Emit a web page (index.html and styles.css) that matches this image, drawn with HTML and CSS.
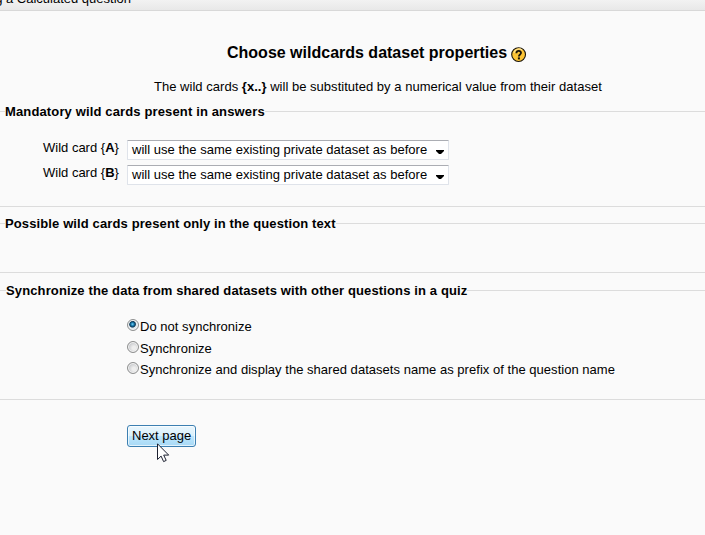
FILE: index.html
```html
<!DOCTYPE html>
<html lang="en">
<head>
<meta charset="utf-8">
<title>Editing a Calculated question</title>
<link rel="stylesheet" href="styles.css">
</head>
<body>
<header class="navbar"><span class="crumb">g a Calculated question</span></header>
<main>
  <div class="heading">
    <h2>Choose wildcards dataset properties</h2>
    <svg class="help" width="16" height="16" viewBox="0 0 16 16"><circle cx="7.6" cy="7.6" r="6.9" fill="#fdc536" stroke="#17120a" stroke-width="1.1"/><path d="M3 6a5 5 0 0 1 8-3" fill="none" stroke="#ffe493" stroke-width="1.2"/><path d="M5.4 6.2C5.5 3.2 10.2 3.3 10 6C9.9 7.5 7.9 7.6 7.9 9.4" fill="none" stroke="#17120a" stroke-width="1.8"/><rect x="6.9" y="10.4" width="2" height="2" fill="#17120a"/></svg>
  </div>
  <p class="intro">The wild cards <b>{x..}</b> will be substituted by a numerical value from their dataset</p>
  <section class="group mandatory">
    <h3 class="legend"><span class="l1">Mandatory wild cards present in answers</span></h3>
    <div class="row"><span class="label">Wild card {<b>A</b>}</span><div class="select"><span>will use the same existing private dataset as before</span><svg width="8" height="4" viewBox="0 0 8 4"><path d="M0 0h8v1L5 4H3L0 1z"/></svg></div></div>
    <div class="row"><span class="label">Wild card {<b>B</b>}</span><div class="select"><span>will use the same existing private dataset as before</span><svg width="8" height="4" viewBox="0 0 8 4"><path d="M0 0h8v1L5 4H3L0 1z"/></svg></div></div>
  </section>
  <section class="group possible">
    <h3 class="legend"><span class="l2">Possible wild cards present only in the question text</span></h3>
  </section>
  <section class="group sync">
    <h3 class="legend wide"><span class="l3">Synchronize the data from shared datasets with other questions in a quiz</span></h3>
    <div class="option"><i class="radio on"></i><span>Do not synchronize</span></div>
    <div class="option"><i class="radio"></i><span>Synchronize</span></div>
    <div class="option third"><i class="radio"></i><span>Synchronize and display the shared datasets name as prefix of the question name</span></div>
  </section>
  <div class="button"><span>Next page</span></div>
</main>
<svg class="cursor" width="13" height="20" viewBox="0 0 13 20"><path d="M.5.8v15.7l3.6-3.4 2.5 5.5 2.6-1.2-2.5-5.3h5z" fill="#fff" stroke="#1c2030"/></svg>
</body>
</html>
```
FILE: styles.css
```css
* { box-sizing: border-box; }
body {
  margin: 0;
  width: 705px;
  height: 535px;
  overflow: hidden;
  position: relative;
  background: #fafafa;
  color: #000;
  font: 13px/16px "Liberation Sans", Arial, sans-serif;
  white-space: nowrap;
}
.navbar {
  height: 11px;
  overflow: hidden;
  display: flex;
  align-items: flex-end;
  background: linear-gradient(#f2f2f2, #e8e8e8);
  border-bottom: 1px solid #d8d8d8;
}
.crumb { width: 131px; display: flex; justify-content: flex-end; margin-bottom: 3px; }
.heading { display: flex; align-items: center; height: 20px; margin-top: 32px; padding-left: 227px; }
h2 { margin: 0; font-size: 16px; line-height: 20px; }
.help { margin: 3px 0 0 4px; }
.intro { margin: 16px 0 0 154px; letter-spacing: .025px; }
.group { border-bottom: 1px solid #dcdcdc; }
.legend { margin: 0; display: flex; align-items: center; font-size: 13px; line-height: 16px; }
.legend::before, .legend::after { content: ""; height: 1px; margin-bottom: 1px; background: #dcdcdc; }
.legend::before { width: 5px; }
.legend.wide::before { width: 6px; }
.legend::after { flex: 1; }
.l1 { letter-spacing: .14px; }
.l2 { letter-spacing: .118px; }
.l3 { letter-spacing: .128px; }
.mandatory { margin-top: 9px; height: 103px; }
.possible { margin-top: 9px; height: 57px; }
.sync { margin-top: 10px; height: 117px; }
.row { display: flex; height: 25px; }
.mandatory .legend { margin-bottom: 20px; }
.label { width: 127px; padding: 0 8px 0 43px; }
.select {
  width: 322px;
  height: 20px;
  padding: 0 4px;
  display: flex;
  align-items: center;
  justify-content: space-between;
  background: #fff;
  border: 1px solid #dfe3ea;
  border-top-color: #abadb3;
  border-radius: 1px;
  letter-spacing: .02px;
}
.select svg { margin-top: 3px; }
.sync .legend { margin-bottom: 20px; }
.option { display: flex; height: 22px; padding-left: 127px; letter-spacing: .03px; }
.third { margin-top: -1px; }
.radio {
  width: 12px;
  height: 12px;
  margin: 0 1px 0 0;
  border: 1px solid #8e8f8f;
  border-radius: 50%;
  background: radial-gradient(circle at 60% 60%, #eee 20%, #c9cbce 65%);
  box-shadow: inset 0 0 0 1px #f4f4f4;
}
.radio.on { background: radial-gradient(circle at 45% 42%, #7fd3f2 0, #1a82b8 18%, #0b3654 36%, #dfe8ee 48%); }
.button {
  width: 69px;
  height: 22px;
  margin: 25px 0 0 127px;
  padding: 2px 4px;
  border: 1px solid #3c7fb1;
  border-radius: 3px;
  background: linear-gradient(#eaf6fd 0, #d9f0fc 50%, #bee6fd 50%, #a7d9f5 100%);
  box-shadow: inset 0 0 0 1px rgba(255, 255, 255, .65);
}
.cursor { position: absolute; left: 157px; top: 443px; }
```
